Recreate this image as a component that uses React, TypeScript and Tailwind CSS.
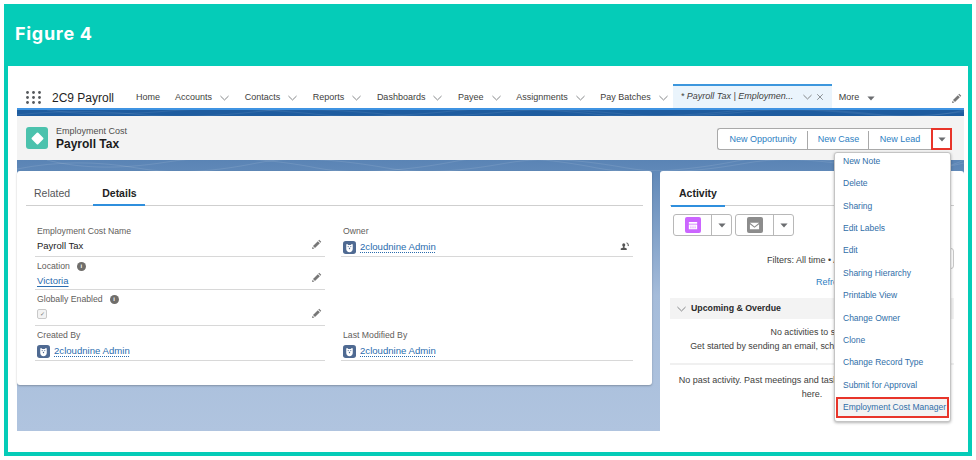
import { X } from "lucide-react";

const navItems = ["Accounts", "Contacts", "Reports", "Dashboards", "Payee", "Assignments", "Pay Batches"];
const menuItems = [
  "New Note",
  "Delete",
  "Sharing",
  "Edit Labels",
  "Edit",
  "Sharing Hierarchy",
  "Printable View",
  "Change Owner",
  "Clone",
  "Change Record Type",
  "Submit for Approval",
];

const Caret = ({ className = "" }: { className?: string }) => (
  <svg viewBox="0 0 10 6" className={`w-[8px] h-[5px] fill-[#6b6d70] ${className}`}>
    <path d="M0.5 0.5h9L5 5.5z" />
  </svg>
);

const Chevron = () => (
  <svg viewBox="0 0 10 6" className="w-[9px] h-[6px] fill-none stroke-[#77797c]" strokeWidth="1">
    <path d="M0.5 0.8L5 5.2l4.5-4.400" />
  </svg>
);

const Pencil = ({ className = "" }: { className?: string }) => (
  <svg viewBox="0 0 12 12" className={`w-[10px] h-[10px] fill-[#777] ${className}`}>
    <path d="M8.6 0.9l2.5 2.5-1 1-2.500-2.500zM7 2.600l2.400 2.400-5.800 5.800-2.400-2.400zM0.700 9.200l2.100 2.100-2.800 0.700z" />
  </svg>
);

// faint swirl texture on the blue bands
const Swirl = ({ className }: { className: string }) => (
  <svg viewBox="0 0 947 11" preserveAspectRatio="none" className={`absolute inset-x-0 top-0 w-full fill-none ${className}`} strokeWidth="1">
    <path d="M0 9C40 1 80 1 120 8S200 11 240 3 330 1 370 8 450 10 490 3 570 1 610 8 690 10 730 3 810 1 850 8 920 9 947 3" />
    <path d="M30 0C60 8 100 10 150 2S260 0 300 8 400 9 440 1 540 0 580 8 680 9 720 1 820 0 860 8 930 8 947 0" />
  </svg>
);

const Bear = () => (
  <svg viewBox="0 0 14 14" className="w-[13px] h-[13px] shrink-0">
    <rect width="14" height="14" rx="3" fill="#4f6a92" />
    <path d="M3.500 3.500h1.600l.6.700h2.600l.6-.7h1.600v5c0 2-1.500 3.500-3.500 3.500s-3.500-1.500-3.500-3.500z" fill="#fff" />
    <circle cx="5.600" cy="6" r=".6" fill="#4f6a92" />
    <circle cx="8.400" cy="6" r=".6" fill="#4f6a92" />
    <rect x="6.300" y="7.200" width="1.400" height="1.600" rx=".5" fill="#4f6a92" />
  </svg>
);

const Info = () => (
  <span className="w-[9px] h-[9px] rounded-full bg-[#706e6b] text-white text-[6px] font-bold leading-[9px] text-center">i</span>
);

const Field = ({
  label,
  info,
  editable,
  className,
  children,
}: {
  label: string;
  info?: boolean;
  editable?: boolean;
  className: string;
  children?: React.ReactNode;
}) => (
  <div className={`relative border-b border-[#d8d8d8] pl-[2px] pr-2 flex flex-col ${className}`}>
    <div className="flex items-center gap-[7px] text-[8.700px] leading-[11px] text-[#5f5e5c]">
      {label}
      {info && <Info />}
    </div>
    {children}
    {editable && <Pencil className="absolute right-[3px] bottom-[7px]" />}
  </div>
);

const AdminLink = () => (
  <div className="flex items-center gap-1 mt-[3px]">
    <Bear />
    <span className="text-[9.600px] text-[#2a6cae] underline decoration-dotted underline-offset-2">2cloudnine Admin</span>
  </div>
);

const SplitButton = ({ color, glyph }: { color: string; glyph: React.ReactNode }) => (
  <div className="w-[59px] h-[22px] flex items-center bg-white border border-[#b8b8b8] rounded-[3px]">
    <div className="w-[37px] flex justify-center">
      <span className={`w-4 h-4 rounded-[2px] flex items-center justify-center ${color}`}>{glyph}</span>
    </div>
    <div className="flex-1 h-full border-l border-[#b8b8b8] flex items-center justify-center">
      <Caret />
    </div>
  </div>
);

export default function App() {
  return (
    <div className="w-[976px] h-[460px] bg-white p-1 font-['Liberation_Sans',sans-serif] overflow-hidden">
      <div className="h-full bg-[#05ccb8] flex flex-col px-1 pb-1">
        <div className="h-[62px] shrink-0 flex items-center pl-[7px] pb-[4px] text-white text-[18px] font-['Inter',sans-serif] font-bold tracking-[0.7px]">Figure 4</div>

        <div className="flex-1 min-h-0 bg-white flex flex-col pt-[18px] pl-[9px] pr-1 pb-[21px]">
          {/* nav bar */}
          <div className="h-6 shrink-0 flex items-center pl-[9px] pt-[4px] text-[9px] text-[#3e3e3c]">
            <svg viewBox="0 0 15 13" className="w-[15px] h-[13px] -mt-[2px] fill-[#55585c]">
              {[1.5, 6.5, 11.5].map((cy) =>
                [1.5, 7.5, 13.5].map((cx) => <circle key={`${cx}-${cy}`} cx={cx} cy={cy} r="1.400" />)
              )}
            </svg>
            <span className="ml-[11px] w-[84px] text-[12px] text-[#1f1f1f]">2C9 Payroll</span>
            <span className="mr-[15px]">Home</span>
            <div className="flex items-center gap-[15.600px]">
              {navItems.map((item) => (
                <div key={item} className="flex items-center gap-2">
                  {item}
                  <Chevron />
                </div>
              ))}
            </div>
            <div className="ml-[5px] -mt-[4px] w-[159px] h-6 flex items-center bg-[#eaf4fc] border-t-2 border-[#3c97dd] pl-2 pr-[7px] italic">
              <span className="flex-1">* Payroll Tax | Employmen...</span>
              <Chevron />
              <X className="w-[10px] h-[10px] ml-[3px] text-[#55585c]" strokeWidth={1.500} />
            </div>
            <span className="ml-[7px]">More</span>
            <Caret className="ml-2" />
            <Pencil className="ml-auto mr-[2px]" />
          </div>

          {/* blue band */}
          <div className="relative h-2 shrink-0 bg-[#1e5c9f] border-t-2 border-[#3f93e2] overflow-hidden">
            <Swirl className="h-[6px] stroke-white/10" />
          </div>

          {/* record header */}
          <div className="h-11 shrink-0 bg-[#f3f3f3] flex items-center pl-[9px] pr-3">
            <div className="w-[22px] h-[22px] rounded-[3px] bg-[#4bc2ad] flex items-center justify-center">
              <span className="w-[9px] h-[9px] bg-white rotate-45 rounded-[1px]" />
            </div>
            <div className="ml-2 flex flex-col">
              <span className="text-[9px] leading-[11px] mt-[1px] text-[#4e4e4c]">Employment Cost</span>
              <span className="text-[12px] leading-[15px] font-bold text-[#1c1c1c]">Payroll Tax</span>
            </div>
            <div className="ml-auto mt-[2px] flex h-[22px] items-stretch">
              <div className="flex bg-white border border-[#a9a9a9] border-r-0 rounded-l-[3px] pt-[2px] text-[9px] text-[#2d80c2]">
                <span className="w-[90px] flex items-center justify-center">New Opportunity</span>
                <span className="w-[61px] flex items-center justify-center shadow-[-1px_0_0_#a9a9a9]">New Case</span>
                <span className="w-[62px] flex items-center justify-center shadow-[-1px_0_0_#a9a9a9]">New Lead</span>
              </div>
              <div className="w-[21px] bg-white border-2 border-[#e8352a] flex items-center justify-center">
                <Caret />
              </div>
            </div>
          </div>

          {/* body */}
          <div className="relative flex-1 min-h-0 flex items-start gap-2 pt-[11px] bg-gradient-to-b from-[#5a84b5] via-[#a5bcda] via-50% to-[#b0c4df]">
            <Swirl className="h-[11px] stroke-white/10" />
            <div className="relative w-[635px] h-[214px] shrink-0 bg-white rounded-[3px] shadow-[0_1px_2px_rgba(0,0,0,0.25)] px-[9px]">
              <div className="h-[35px] flex items-stretch border-b border-[#cfcfcf] text-[10.500px]">
                <span className="ml-2 pt-[15px] text-[#55565a]">Related</span>
                <span className="relative ml-[32px] pt-[15px] font-bold text-[#222]">
                  Details
                  <span className="absolute -left-[9px] -right-[8px] -bottom-px h-0.5 bg-[#2f8fdd]" />
                </span>
              </div>
              <div className="grid grid-cols-[290px_292px] gap-x-4 ml-[9px] mt-5 text-[9.500px] text-[#222]">
                <Field label="Employment Cost Name" editable className="h-[31px]">
                  <span className="mt-[2px]">Payroll Tax</span>
                </Field>
                <Field label="Owner" className="h-[31px]">
                  <AdminLink />
                  <svg viewBox="0 0 12 12" className="absolute right-1 bottom-[5px] w-[9px] h-[9px] fill-[#555]">
                    <path d="M5 1.500a2 2 0 0 1 2 2c0 1.200-.6 2.200-1.200 2.700v1l3.200 1.500v2H1v-2l3.200-1.500v-1C3.600 5.700 3 4.700 3 3.500a2 2 0 0 1 2-2zM8.500 0.500a3 3 0 0 1 3 3h1l-1.500 2-1.500-2h1a2 2 0 0 0-2-2z" />
                  </svg>
                </Field>
                <Field label="Location" info editable className="h-[33px] pt-[4px]">
                  <span className="mt-[2px] text-[#2a6cae] underline underline-offset-2">Victoria</span>
                </Field>
                <div />
                <Field label="Globally Enabled" info editable className="h-9 pt-[4px]">
                  <span className="mt-[4px] w-[10px] h-[10px] border border-[#c9c9c9] bg-[#f3f3f3] rounded-[2px] flex items-center justify-center text-[6px] leading-none text-[#777]">✓</span>
                </Field>
                <div />
                <Field label="Created By" className="h-[35px] pt-[4px]">
                  <AdminLink />
                </Field>
                <Field label="Last Modified By" className="h-[35px] pt-[4px]">
                  <AdminLink />
                </Field>
              </div>
            </div>

            <div className="relative flex-1 self-stretch bg-white rounded-t-[3px] px-[10px] text-[9px] text-[#3e3e3c]">
              <div className="h-[35px] border-b border-[#cfcfcf] text-[10.500px]">
                <span className="relative inline-block h-[35px] ml-[9px] pt-[15px] font-bold text-[#222]">
                  Activity
                  <span className="absolute -left-[8px] -right-[8px] -bottom-px h-0.5 bg-[#2f8fdd]" />
                </span>
              </div>
              <div className="flex gap-[3px] mt-[8px] ml-[3px]">
                <SplitButton
                  color="bg-[#cb65ff]"
                  glyph={
                    <svg viewBox="0 0 12 12" className="w-[10px] h-[10px] fill-white">
                      <path d="M1 2.500h10v2H1zM1 5.500h10V11H1zM3 6.800v1h1v-1zM5.500 6.800v1h1v-1zM8 6.800v1h1v-1zM3 8.800v1h1v-1zM5.500 8.800v1h1v-1zM8 8.800v1h1v-1z" fillRule="evenodd" />
                    </svg>
                  }
                />
                <SplitButton
                  color="bg-[#8c8c8c]"
                  glyph={
                    <svg viewBox="0 0 12 12" className="w-[11px] h-[11px] fill-white">
                      <path d="M1 3h10L6 7zM1 4.500l5 4 5-4V10H1z" />
                    </svg>
                  }
                />
              </div>
              <div className="relative mt-[12px] h-[21px] flex items-center pt-[4px] pl-[97px] whitespace-nowrap">
                Filters: All time • All activities • All types
                <span className="absolute right-0 top-0 w-[18px] h-[21px] border border-[#c9c9c9] rounded-[3px]" />
              </div>
              <p className="mt-[5px] h-[16px] leading-[16px] pl-[146px] text-[#2d80c2] whitespace-nowrap">Refresh • Expand All • View All</p>
              <div className="mt-[8px] h-[21px] flex items-center bg-[#f3f3f3] pl-[7px] pt-[1px] font-bold text-[8.800px] text-[#2a2a2a]">
                <Chevron />
                <span className="ml-[5px]">Upcoming &amp; Overdue</span>
              </div>
              <div className="mt-[6px] text-center leading-[14px] text-[8.900px] pb-[10px] border-b-2 border-[#f0f0f0]">
                <p>No activities to show.</p>
                <p>Get started by sending an email, scheduling a task, and more.</p>
              </div>
              <p className="mt-[8px] text-center leading-[14px]">
                No past activity. Past meetings and tasks marked as done show up
                <br />
                here.
              </p>
            </div>

            {/* actions menu */}
            <div className="absolute left-[817px] -top-2 w-[117px] h-[270px] bg-white border border-[#c4c4c4] rounded-[3px] shadow-[0_1px_3px_rgba(0,0,0,0.3)] px-[1px] text-[8.500px] text-[#2f6ea8]">
              <div className="-mt-[3px]">
                {menuItems.map((item) => (
                  <div key={item} className="h-[22.400px] flex items-center pl-[7px]">{item}</div>
                ))}
                <div className="h-[21px] mt-[1px] flex items-center pl-[5px] bg-[#f3f3f3] border-2 border-[#e8352a] whitespace-nowrap">Employment Cost Manager</div>
              </div>
            </div>
          </div>
        </div>
      </div>
    </div>
  );
}
